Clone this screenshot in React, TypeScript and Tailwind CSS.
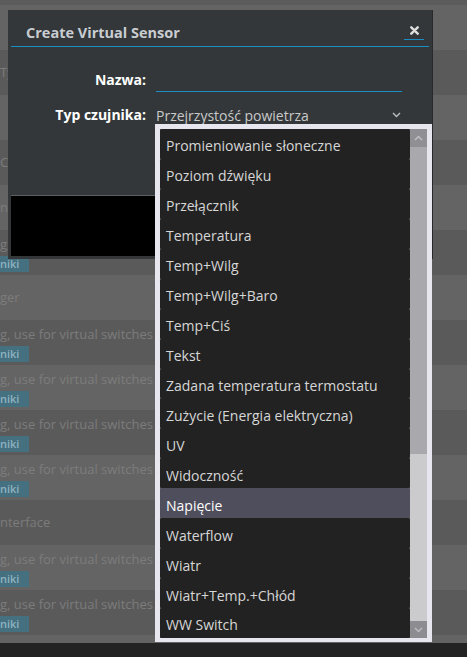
import React from "react";

const sensorTypes = [
  "Promieniowanie słoneczne",
  "Poziom dźwięku",
  "Przełącznik",
  "Temperatura",
  "Temp+Wilg",
  "Temp+Wilg+Baro",
  "Temp+Ciś",
  "Tekst",
  "Zadana temperatura termostatu",
  "Zużycie (Energia elektryczna)",
  "UV",
  "Widoczność",
  "Napięcie",
  "Waterflow",
  "Wiatr",
  "Wiatr+Temp.+Chłód",
  "WW Switch",
];

interface RowData {
  text: string;
  badge?: boolean;
}

// table rows sitting behind the modal (only the left edge is visible)
const rows: RowData[] = [
  { text: "" },
  { text: "Typ" },
  { text: "" },
  { text: "Co" },
  { text: "nc" },
  { text: "g,", badge: true },
  { text: "ger" },
  { text: "g, use for virtual switches", badge: true },
  { text: "g, use for virtual switches", badge: true },
  { text: "g, use for virtual switches", badge: true },
  { text: "g, use for virtual switches", badge: true },
  { text: "nterface" },
  { text: "g, use for virtual switches", badge: true },
  { text: "g, use for virtual switches", badge: true },
];

function Chevron({ up, className }: { up?: boolean; className?: string }) {
  return (
    <svg width="9" height="6" viewBox="0 0 9 6" className={className}>
      <polyline
        points={up ? "1,5 4.5,1.5 8,5" : "1,1 4.5,4.5 8,1"}
        fill="none"
        stroke="currentColor"
        strokeWidth="1.4"
      />
    </svg>
  );
}

function BackgroundTable() {
  return (
    <div className="flex flex-col h-full text-[13px] text-[#7c7c7c]">
      <div className="h-[5px] bg-[#5c5c5c]" />
      {rows.map((r, i) => (
        <div
          key={i}
          className={`h-[45px] whitespace-nowrap overflow-hidden ${
            i % 2 === 1 ? "bg-[#5a5a5a]" : "bg-[#646464]"
          } ${r.badge ? "pt-[5px]" : "flex items-center"}`}
        >
          <div className="leading-[19px]">{r.text}</div>
          {r.badge && (
            <div className="mt-[1px] inline-flex h-[16px] items-center bg-[#44707f] pr-[10px] text-[11px] font-semibold text-[#8fb3c2]">
              niki
            </div>
          )}
        </div>
      ))}
      <div className="h-[8px] bg-[#646464]" />
      <div className="flex-1 bg-[#232323]" />
    </div>
  );
}

function Modal() {
  return (
    <div className="absolute left-[8px] top-[10px] w-[425px] bg-[#33373a] border-r border-[#27292c] pb-[3px]">
      <div className="mx-[3px] h-[37px] border-b border-[#1b8ec3] flex justify-between">
        <div className="pl-[15px] pt-[12px] text-[14.5px] font-bold text-[#c9cdd1]">Create Virtual Sensor</div>
        <div className="mr-[5px] mt-[13px] h-[17px] w-[20px] border-b-[1.5px] border-[#1b8ec3] flex justify-center pt-[3px]">
          <svg width="9" height="9" viewBox="0 0 9 9">
            <path d="M1.3 1.3 L7.7 7.7 M7.7 1.3 L1.3 7.7" stroke="#dedede" strokeWidth="2.4" strokeLinecap="round" />
          </svg>
        </div>
      </div>
      <div className="pt-[21px] flex flex-col gap-[11px]">
        <div className="flex h-[24px]">
          <div className="w-[138px] text-right text-[14px] font-bold text-white leading-[24px]">Nazwa:</div>
          <div className="ml-[10px] w-[246px] border-b border-[#1b8ec3]" />
        </div>
        <div className="flex h-[24px]">
          <div className="w-[138px] text-right text-[14px] font-bold text-white leading-[24px]">Typ czujnika:</div>
          <div className="ml-[10px] w-[246px] flex items-center justify-between text-[14px] text-[#c9c9c9]">
            <span className="pt-[1px]">Przejrzystość powietrza</span>
            <Chevron className="mr-[1px] text-[#bdbdbd]" />
          </div>
        </div>
      </div>
      <div className="h-[68px]" />
      <div className="mx-[3px] h-[61px] bg-black border-t border-[#5c6064]" />
    </div>
  );
}

function Dropdown() {
  return (
    <div className="absolute left-[155px] top-[124px] w-[277px] h-[518px] border-x-[5px] border-t-[5px] border-b-[4px] border-[#e7e5ed] flex bg-[#e7e5ed]">
      <div className="w-[250px] flex flex-col bg-[#6e6e6e]">
        {sensorTypes.map((t) => (
          <div
            key={t}
            className={`h-[29.94px] flex items-center pl-[6px] pt-[4px] rounded-[1.5px] text-[14px] ${
              t === "Napięcie" ? "bg-[#4f4e5c] text-white" : "bg-[#222222] text-[#d6d6d6]"
            }`}
          >
            {t}
          </div>
        ))}
      </div>
      <div className="w-[17px] flex flex-col">
        <div className="h-[18px] bg-[#908f94] flex items-center justify-center text-[#c2c1c6]">
          <Chevron up />
        </div>
        <div className="h-[307px] bg-[#a9a8ad]" />
        <div className="flex-1 bg-[#cbcacd]" />
        <div className="h-[17px] bg-[#8d8c91] flex items-center justify-center text-[#bebdc2]">
          <Chevron />
        </div>
      </div>
    </div>
  );
}

export default function App() {
  return (
    <div
      className="relative w-[467px] h-[657px] overflow-hidden bg-[#5f5f5f]"
      style={{ fontFamily: '"Open Sans", "Noto Sans", sans-serif' }}
    >
      <BackgroundTable />
      <Modal />
      <Dropdown />
    </div>
  );
}
